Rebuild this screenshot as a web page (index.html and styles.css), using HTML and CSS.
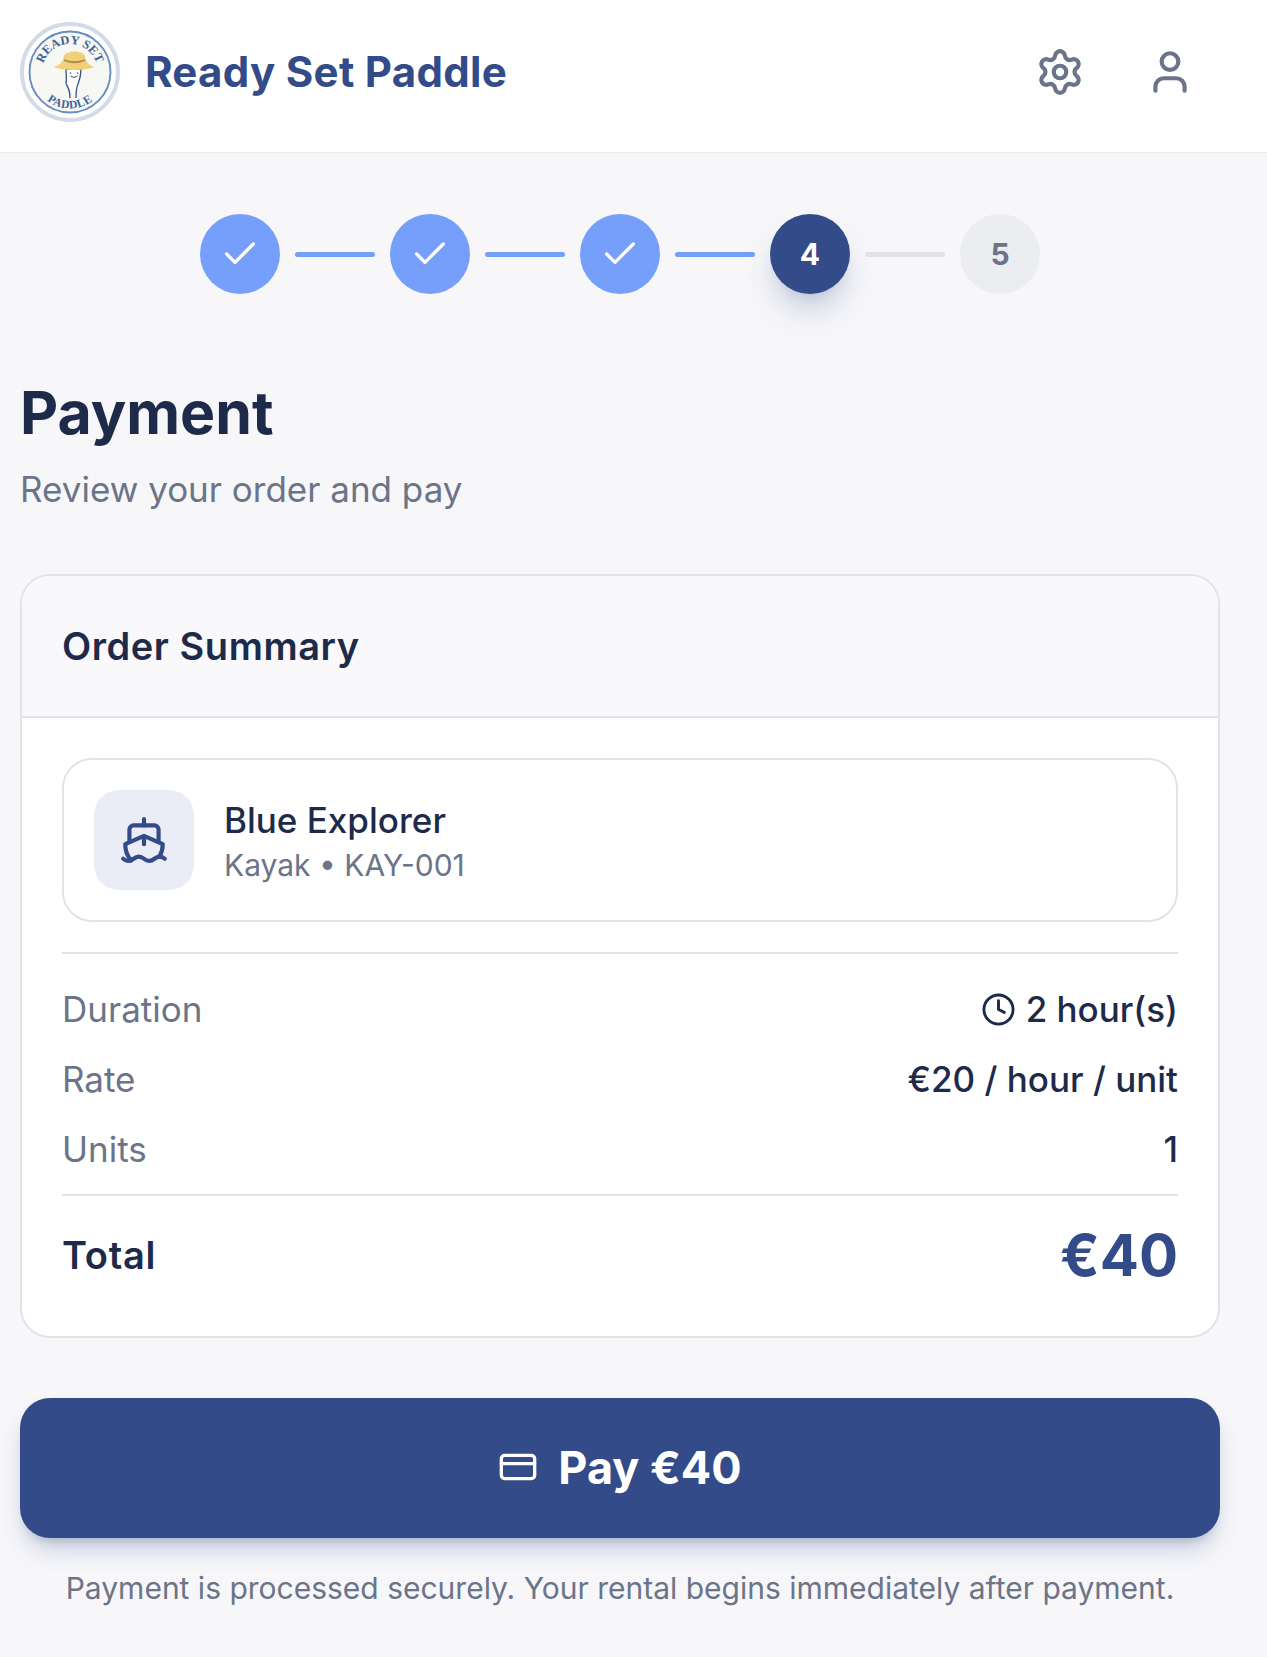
FILE: index.html
```html
<!DOCTYPE html>
<html lang="en">
<head>
<meta charset="utf-8">
<title>Ready Set Paddle</title>
<link rel="stylesheet" href="styles.css">
</head>
<body>
<header class="topbar">
  <div class="brand">
    <svg class="logo" viewBox="0 0 100 100" aria-hidden="true">
      <circle cx="50" cy="50" r="48" fill="#fff" stroke="#d3dbe8" stroke-width="4"/>
      <circle cx="50" cy="50" r="40.500" fill="#f7f8f3" stroke="#6a8dc0" stroke-width="1.900"/>
      <defs>
        <path id="arcTop" d="M22 50 A28 28 0 0 1 78 50"/>
        <path id="arcBot" d="M13.500 50 A36.500 36.500 0 0 0 86.500 50"/>
      </defs>
      <text class="logo-text"><textPath href="#arcTop" startOffset="50%" text-anchor="middle">READY SET</textPath></text>
      <text class="logo-text logo-text-low"><textPath href="#arcBot" startOffset="50%" text-anchor="middle">PADDLE</textPath></text>
      <path d="M46 62 C47 57 46 53 46 47 L61 47 C61 53 60 57 58 62 C56 66 56 70 56 76 M46 62 C49 66 50 70 50 76" fill="#fff" stroke="#33507f" stroke-width="1.300"/>
      <path d="M34 45 C42 42 43 39 44 34 C46 28 63 28 65 34 C66 39 67 42 74 45 C66 49 42 49 34 45Z" fill="#f0d078"/>
      <path d="M44 38 C50 41 59 41 65 38" fill="none" stroke="#b08a45" stroke-width="1.800"/>
      <path d="M50.500 54 Q54 57 57.500 54" fill="none" stroke="#33507f" stroke-width="1"/>
      <circle cx="50.500" cy="51" r=".8" fill="#33507f"/><circle cx="57.500" cy="51" r=".8" fill="#33507f"/>
    </svg>
    <span class="brand-name">Ready Set Paddle</span>
  </div>
  <div class="top-actions">
    <svg class="top-icon" viewBox="0 0 24 24" fill="none" stroke="currentColor" stroke-width="2" stroke-linecap="round" stroke-linejoin="round" aria-hidden="true"><path d="M9.671 4.136a2.340 2.340 0 0 1 4.659 0 2.340 2.340 0 0 0 3.319 1.915 2.340 2.340 0 0 1 2.330 4.033 2.340 2.340 0 0 0 0 3.831 2.340 2.340 0 0 1-2.330 4.033 2.340 2.340 0 0 0-3.319 1.915 2.340 2.340 0 0 1-4.659 0 2.340 2.340 0 0 0-3.320-1.915 2.340 2.340 0 0 1-2.330-4.033 2.340 2.340 0 0 0 0-3.831A2.340 2.340 0 0 1 6.350 6.051a2.340 2.340 0 0 0 3.319-1.915"/><circle cx="12" cy="12" r="3"/></svg>
    <svg class="top-icon" viewBox="0 0 24 24" fill="none" stroke="currentColor" stroke-width="2" stroke-linecap="round" stroke-linejoin="round" aria-hidden="true"><circle cx="12" cy="7" r="4"/><path d="M5 21v-2a4 4 0 0 1 4-4h6a4 4 0 0 1 4 4v2"/></svg>
  </div>
</header>
<main class="page">
  <div class="stepper">
    <span class="step done"><svg class="check" viewBox="0 0 24 24" fill="none" stroke="currentColor" stroke-width="2" stroke-linecap="round" stroke-linejoin="round"><path d="M20 6 9 17l-5-5"/></svg></span>
    <span class="line on"></span>
    <span class="step done"><svg class="check" viewBox="0 0 24 24" fill="none" stroke="currentColor" stroke-width="2" stroke-linecap="round" stroke-linejoin="round"><path d="M20 6 9 17l-5-5"/></svg></span>
    <span class="line on"></span>
    <span class="step done"><svg class="check" viewBox="0 0 24 24" fill="none" stroke="currentColor" stroke-width="2" stroke-linecap="round" stroke-linejoin="round"><path d="M20 6 9 17l-5-5"/></svg></span>
    <span class="line on"></span>
    <span class="step current">4</span>
    <span class="line"></span>
    <span class="step todo">5</span>
  </div>

  <h1 class="title">Payment</h1>
  <p class="subtitle">Review your order and pay</p>

  <section class="card">
    <h2 class="card-head">Order Summary</h2>
    <div class="card-body">
      <div class="item">
        <div class="item-icon">
          <svg viewBox="0 0 24 24" fill="none" stroke="currentColor" stroke-width="2" stroke-linecap="round" stroke-linejoin="round" aria-hidden="true"><path d="M12 10.189V14"/><path d="M12 2v3"/><path d="M19 13V7a2 2 0 0 0-2-2H7a2 2 0 0 0-2 2v6"/><path d="M19.380 20A11.600 11.600 0 0 0 21 14l-8.188-3.639a2 2 0 0 0-1.624 0L3 14a11.600 11.600 0 0 0 2.810 7.760"/><path d="M2 21c.6.500 1.200 1 2.500 1 2.500 0 2.500-2 5-2 1.300 0 1.900.5 2.500 1s1.200 1 2.500 1c2.500 0 2.500-2 5-2 1.300 0 1.900.5 2.500 1"/></svg>
        </div>
        <div class="item-text">
          <div class="item-name">Blue Explorer</div>
          <div class="item-meta">Kayak • KAY-001</div>
        </div>
      </div>
      <div class="rows">
        <div class="row"><span class="row-label">Duration</span><span class="row-value"><svg class="clock" viewBox="0 0 24 24" fill="none" stroke="currentColor" stroke-width="2" stroke-linecap="round" stroke-linejoin="round" aria-hidden="true"><circle cx="12" cy="12" r="10"/><path d="M12 6v6l4 2"/></svg>2 hour(s)</span></div>
        <div class="row"><span class="row-label">Rate</span><span class="row-value">€20 / hour / unit</span></div>
        <div class="row"><span class="row-label">Units</span><span class="row-value">1</span></div>
      </div>
      <div class="total">
        <span class="total-label">Total</span>
        <span class="total-value">€40</span>
      </div>
    </div>
  </section>

  <button class="pay" type="button">
    <svg viewBox="0 0 24 24" fill="none" stroke="currentColor" stroke-width="2" stroke-linecap="round" stroke-linejoin="round" aria-hidden="true"><rect x="2" y="5" width="20" height="14" rx="2"/><path d="M2 10h20"/></svg>
    Pay €40
  </button>
  <p class="note">Payment is processed securely. Your rental begins immediately after payment.</p>
</main>
</body>
</html>
```

FILE: styles.css
```css
* { box-sizing: border-box; }
html, body { margin: 0; padding: 0; }
body {
  background: #f7f7fa;
  color: #1e2a4a;
  font-family: Inter, "Liberation Sans", sans-serif;
  height: 1657px;
  overflow: hidden;
}
.topbar {
  height: 153px;
  background: #fff;
  border-bottom: 1px solid #ebecf0;
  display: flex;
  align-items: center;
  justify-content: space-between;
  padding: 0 72px 8px 20px;
}
.brand { display: flex; align-items: center; gap: 25px; }
.logo { width: 100px; height: 100px; display: block; }
.logo-text { font-family: "Liberation Serif", serif; font-size: 12.500px; font-weight: 700; fill: #3f629b; }
.logo-text-low { font-size: 11.500px; letter-spacing: .5px; }
.brand-name {
  font-size: 42px;
  font-weight: 700;
  color: #334b88;
  letter-spacing: .3px;
  padding-bottom: 2px;
}
.top-actions { display: flex; gap: 60px; align-items: center; }
.top-icon { width: 50px; height: 50px; color: #6b7488; display: block; }
.page { padding: 61px 47px 0 20px; }
.stepper { display: flex; justify-content: center; align-items: center; gap: 15px; }
.step {
  width: 80px; height: 80px; border-radius: 50%;
  display: flex; align-items: center; justify-content: center;
  font-size: 30px; font-weight: 700;
}
.done { background: #769ffb; color: #fff; }
.check { width: 40px; height: 40px; }
.current { background: #334b88; color: #fff; box-shadow: 0 20px 32px -6px rgba(51,75,136,.26), 0 8px 12px -6px rgba(51,75,136,.12); }
.todo { background: #ecedf0; color: #6b7488; }
.line { width: 80px; height: 5px; border-radius: 3px; background: #e1e3e8; }
.line.on { background: #769ffb; }
.title { margin: 74px 0 0; font-size: 59px; line-height: 90px; font-weight: 700; color: #1e2a4a; }
.subtitle { margin: 5px 0 0; font-size: 35px; line-height: 52px; color: #6b7488; }
.card {
  margin-top: 59px;
  background: #fff;
  border: 2px solid #e1e3e8;
  border-radius: 30px;
  overflow: hidden;
  height: 764px;
}
.card-head {
  margin: 0;
  height: 142px;
  background: #f9f9fb;
  border-bottom: 2px solid #e1e3e8;
  display: flex; align-items: center;
  padding: 0 40px;
  font-size: 38px; font-weight: 600; color: #1e2a4a;
  letter-spacing: .55px;
}
.card-body { padding: 40px 40px 0; }
.item {
  height: 164px;
  border: 2px solid #e1e3e8;
  border-radius: 30px;
  display: flex; align-items: center;
  padding: 0 30px;
  gap: 30px;
}
.item-icon {
  width: 100px; height: 100px; border-radius: 25px;
  background: #eaedf5; color: #334b88;
  display: flex; align-items: center; justify-content: center;
}
.item-icon svg { width: 50px; height: 50px; }
.item-text { padding-top: 3px; }
.item-name { font-size: 35px; line-height: 46px; font-weight: 500; color: #1e2a4a; }
.item-meta { font-size: 30px; line-height: 44px; color: #6b7488; }
.rows {
  margin-top: 30px;
  border-top: 2px solid #e1e3e8;
  border-bottom: 2px solid #e1e3e8;
  padding: 20px 0 10px;
}
.row { height: 70px; display: flex; align-items: center; justify-content: space-between; font-size: 35px; }
.row-label { color: #6b7488; }
.row-value { color: #1e2a4a; font-weight: 500; display: flex; align-items: center; gap: 10px; }
.clock { width: 35px; height: 35px; }
.total { display: flex; justify-content: space-between; align-items: center; height: 118px; }
.total-label { font-size: 38px; font-weight: 600; letter-spacing: .7px; }
.total-value { font-size: 58px; font-weight: 700; color: #334b88; }
.pay {
  margin-top: 60px;
  width: 100%;
  height: 140px;
  border: 0;
  border-radius: 30px;
  background: #334b88;
  color: #fff;
  font-family: Inter, sans-serif;
  font-size: 45px;
  font-weight: 700;
  display: flex; align-items: center; justify-content: center;
  gap: 20px;
  padding: 0 0 2px;
  box-shadow: 0 15px 25px -5px rgba(51,75,136,.25), 0 8px 10px -6px rgba(51,75,136,.25);
}
.pay svg { width: 40px; height: 40px; }
.note { margin: 29px 0 0; text-align: center; font-size: 30px; line-height: 42px; color: #6b7488; }
```
